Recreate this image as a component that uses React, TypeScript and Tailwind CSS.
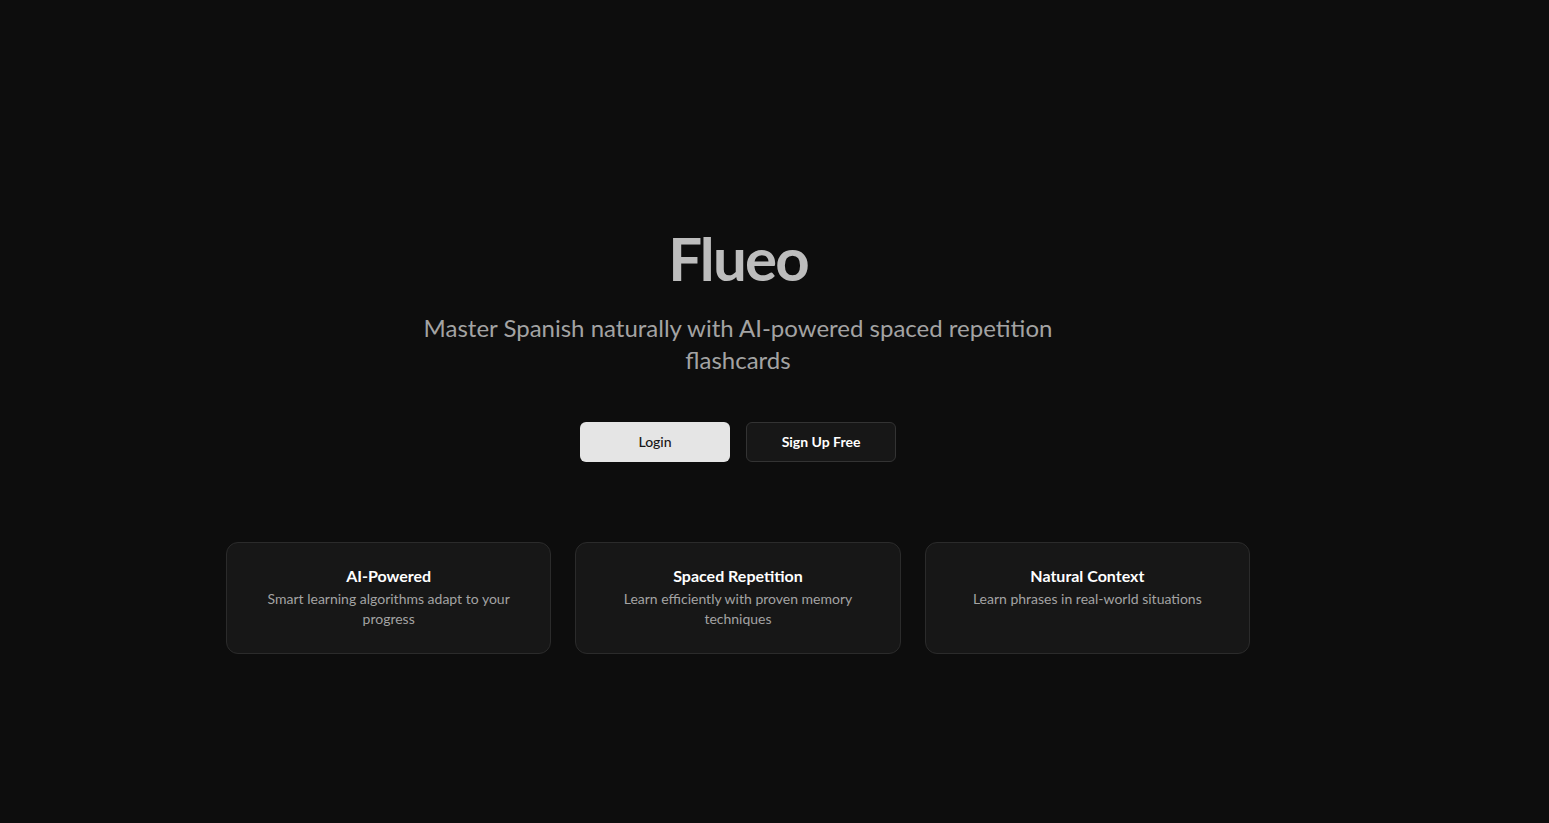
import React from "react";

const features = [
  { title: "AI-Powered", desc: "Smart learning algorithms adapt to your progress" },
  { title: "Spaced Repetition", desc: "Learn efficiently with proven memory techniques" },
  { title: "Natural Context", desc: "Learn phrases in real-world situations" },
];

export default function App() {
  return (
    <div
      className="min-h-screen w-full bg-[#0d0d0d] flex flex-col items-center pt-[228px] pl-4 pr-[89px]"
      style={{ fontFamily: '"Segoe UI", Lato, "Noto Sans", sans-serif' }}
    >
      <h1 className="text-[60px] leading-[60px] font-bold tracking-[-0.03em] text-[#bdbdbd]">Flueo</h1>
      <p className="mt-6 max-w-2xl text-center text-2xl leading-8 text-[#a3a3a3]">
        Master Spanish naturally with AI-powered spaced repetition flashcards
      </p>
      <div className="mt-[46px] flex gap-4">
        <button className="h-10 w-[150px] rounded-md bg-[#e5e5e5] text-sm font-medium text-[#171717]">
          Login
        </button>
        <button className="h-10 w-[150px] rounded-md border border-[#333333] bg-[#171717] text-sm font-bold text-white">
          Sign Up Free
        </button>
      </div>
      <div className="mt-20 grid w-full max-w-5xl grid-cols-3 gap-6">
        {features.map((f) => (
          <div
            key={f.title}
            className="rounded-xl border border-[#2b2b2b] bg-[#171717] px-6 pt-5 pb-6 text-center"
          >
            <h3 className="text-base leading-[26px] font-bold text-white">{f.title}</h3>
            <p className="text-sm leading-5 text-[#a3a3a3]">{f.desc}</p>
          </div>
        ))}
      </div>
    </div>
  );
}
